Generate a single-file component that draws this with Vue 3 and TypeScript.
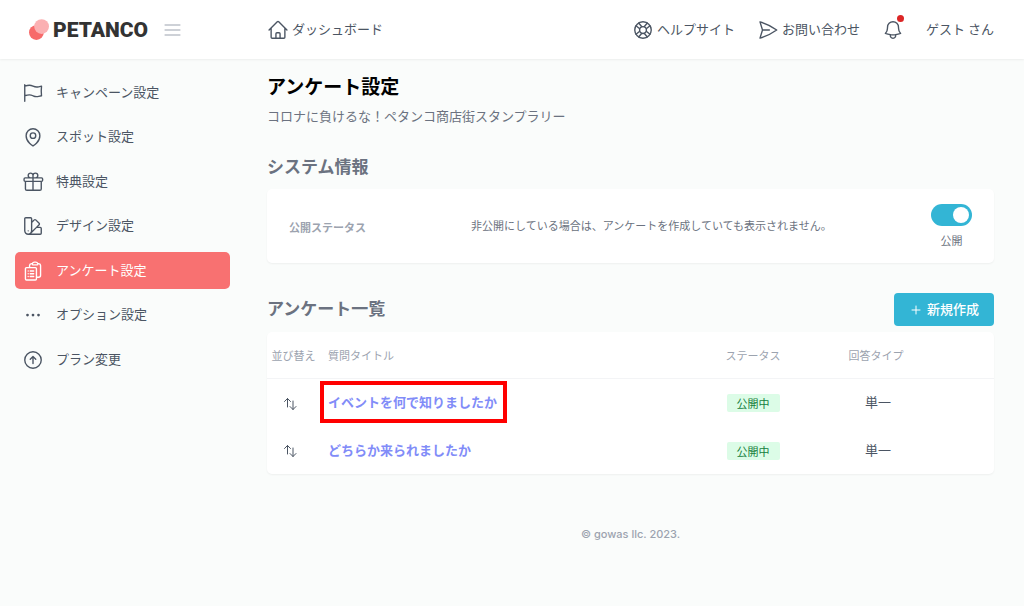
<script setup lang="ts">
import { ref } from 'vue'

interface NavItem {
  id: string
  label: string
  icon: string
}

interface Question {
  id: number
  title: string
  status: string
  type: string
  highlighted: boolean
}

const navItems: NavItem[] = [
  {
    id: 'campaign',
    label: 'キャンペーン設定',
    icon: 'M3 3v1.5M3 21v-6m0 0l2.77-.693a9 9 0 016.208.682l.108.054a9 9 0 006.086.71l3.114-.732a48.524 48.524 0 01-.005-10.499l-3.11.732a9 9 0 01-6.085-.711l-.108-.054a9 9 0 00-6.208-.682L3 4.5M3 15V4.5',
  },
  {
    id: 'spot',
    label: 'スポット設定',
    icon: 'M15 10.5a3 3 0 11-6 0 3 3 0 016 0zM19.5 10.5c0 7.142-7.5 11.25-7.5 11.25S4.5 17.642 4.5 10.5a7.5 7.5 0 1115 0z',
  },
  {
    id: 'gift',
    label: '特典設定',
    icon: 'M21 11.25v8.25a1.5 1.5 0 01-1.5 1.5H5.25a1.5 1.5 0 01-1.5-1.5v-8.25M12 4.875A2.625 2.625 0 109.375 7.5H12m0-2.625V7.5m0-2.625A2.625 2.625 0 1114.625 7.5H12m0 0V21m-8.625-9.75h18c.621 0 1.125-.504 1.125-1.125v-1.5c0-.621-.504-1.125-1.125-1.125h-18c-.621 0-1.125.504-1.125 1.125v1.5c0 .621.504 1.125 1.125 1.125z',
  },
  {
    id: 'design',
    label: 'デザイン設定',
    icon: 'M4.098 19.902a3.75 3.75 0 005.304 0l6.401-6.402M6.75 21A3.75 3.75 0 013 17.25V4.125C3 3.504 3.504 3 4.125 3h5.25c.621 0 1.125.504 1.125 1.125v4.072M6.75 21a3.75 3.75 0 003.75-3.75V8.197M6.75 21h13.125c.621 0 1.125-.504 1.125-1.125v-5.25c0-.621-.504-1.125-1.125-1.125h-4.072M10.5 8.197l2.88-2.88c.438-.439 1.15-.439 1.59 0l3.712 3.713c.44.44.44 1.152 0 1.59l-2.879 2.88M6.75 17.25h.008v.008H6.75v-.008z',
  },
  {
    id: 'survey',
    label: 'アンケート設定',
    icon: 'M9 12h3.75M9 15h3.75M9 18h3.75m3 .75H18a2.25 2.25 0 002.25-2.25V6.108c0-1.135-.845-2.098-1.976-2.192a48.424 48.424 0 00-1.123-.08m-5.801 0c-.065.21-.1.433-.1.664 0 .414.336.75.75.75h4.5a.75.75 0 00.75-.75 2.25 2.25 0 00-.1-.664m-5.8 0A2.251 2.251 0 0113.5 2.25H15c1.012 0 1.867.668 2.15 1.586m-5.8 0c-.376.023-.75.05-1.124.08C9.095 4.01 8.25 4.973 8.25 6.108V8.25m0 0H4.875c-.621 0-1.125.504-1.125 1.125v11.25c0 .621.504 1.125 1.125 1.125h9.75c.621 0 1.125-.504 1.125-1.125V9.375c0-.621-.504-1.125-1.125-1.125H8.25zM6.75 12h.008v.008H6.75V12zm0 3h.008v.008H6.75V15zm0 3h.008v.008H6.75V18z',
  },
  {
    id: 'option',
    label: 'オプション設定',
    icon: 'M6.75 12a.75.75 0 11-1.5 0 .75.75 0 011.5 0zM12.75 12a.75.75 0 11-1.5 0 .75.75 0 011.5 0zM18.75 12a.75.75 0 11-1.5 0 .75.75 0 011.5 0z',
  },
  {
    id: 'plan',
    label: 'プラン変更',
    icon: 'M15 11.25l-3-3m0 0l-3 3m3-3v7.5M21 12a9 9 0 11-18 0 9 9 0 0118 0z',
  },
]

const questions: Question[] = [
  { id: 1, title: 'イベントを何で知りましたか', status: '公開中', type: '単一', highlighted: true },
  { id: 2, title: 'どちらか来られましたか', status: '公開中', type: '単一', highlighted: false },
]

const activeId = ref('survey')
const published = ref(true)
</script>

<template>
  <div class="page">
    <header class="topbar">
      <div class="brand">
        <a class="logo" href="#">
          <svg class="logo-mark" viewBox="0 0 20 22" aria-hidden="true">
            <circle cx="7.4" cy="13.6" r="7.4" fill="#f76a6a" />
            <circle cx="12.6" cy="7.6" r="7.4" fill="#fbb0b2" />
          </svg>
          <span>PETANCO</span>
        </a>
        <button class="icon-button menu" type="button" aria-label="メニュー">
          <svg viewBox="0 0 17 12" aria-hidden="true"><path d="M1 1h15M1 6h15M1 11h15" /></svg>
        </button>
      </div>
      <nav class="top-links" aria-label="ヘッダー">
        <a class="top-link" href="#">
          <svg class="icon" viewBox="0 0 24 24" aria-hidden="true">
            <path d="M2.25 12l8.954-8.955c.44-.439 1.152-.439 1.591 0L21.75 12M4.5 9.75v10.125c0 .621.504 1.125 1.125 1.125H9.75v-4.875c0-.621.504-1.125 1.125-1.125h2.25c.621 0 1.125.504 1.125 1.125V21h4.125c.621 0 1.125-.504 1.125-1.125V9.75M8.25 21h8.25" />
          </svg>
          <span class="label">ダッシュボード</span>
        </a>
        <a class="top-link help" href="#">
          <svg class="icon" viewBox="0 0 24 24" aria-hidden="true">
            <circle cx="12" cy="12" r="9" />
            <circle cx="12" cy="12" r="3.75" />
            <path d="M16.712 4.33l-3.448 4.138M19.67 7.288l-4.138 3.448M7.288 4.33l3.448 4.138M4.33 7.288l4.138 3.448M16.712 19.67l-3.448-4.138M19.67 16.712l-4.138-3.448M7.288 19.67l3.448-4.138M4.33 16.712l4.138-3.448" />
          </svg>
          <span class="label">ヘルプサイト</span>
        </a>
        <a class="top-link" href="#">
          <svg class="icon" viewBox="0 0 24 24" aria-hidden="true">
            <path d="M6 12L3.269 3.126A59.768 59.768 0 0121.485 12 59.77 59.77 0 013.27 20.876L5.999 12zm0 0h7.5" />
          </svg>
          <span class="label">お問い合わせ</span>
        </a>
        <button class="icon-button bell" type="button" aria-label="通知">
          <svg class="icon" viewBox="0 0 24 24" aria-hidden="true">
            <path d="M14.857 17.082a23.848 23.848 0 005.454-1.31A8.967 8.967 0 0118 9.75v-.7V9A6 6 0 006 9v.75a8.967 8.967 0 01-2.312 6.022c1.733.64 3.56 1.085 5.455 1.31m5.714 0a24.255 24.255 0 01-5.714 0m5.714 0a3 3 0 11-5.714 0" />
          </svg>
          <span class="dot"></span>
        </button>
        <a class="top-link" href="#"><span class="label">ゲスト さん</span></a>
      </nav>
    </header>

    <div class="body">
      <nav class="sidebar" aria-label="メイン">
        <a
          v-for="item in navItems"
          :key="item.id"
          href="#"
          class="nav-item"
          :class="{ active: item.id === activeId }"
          :aria-current="item.id === activeId ? 'page' : undefined"
          @click.prevent="activeId = item.id"
        >
          <svg class="icon" viewBox="0 0 24 24" aria-hidden="true"><path :d="item.icon" /></svg>
          <span class="label">{{ item.label }}</span>
        </a>
      </nav>

      <main class="content">
        <h1>アンケート設定</h1>
        <p class="subtitle">コロナに負けるな！ペタンコ商店街スタンプラリー</p>

        <section>
          <h2 class="system-title">システム情報</h2>
          <div class="card status-card">
            <label class="status-label" for="publish">公開ステータス</label>
            <p class="status-text">非公開にしている場合は、アンケートを作成していても表示されません。</p>
            <div class="toggle">
              <input id="publish" v-model="published" class="switch" type="checkbox" role="switch" />
              <span>{{ published ? '公開' : '非公開' }}</span>
            </div>
          </div>
        </section>

        <section>
          <div class="list-head">
            <h2>アンケート一覧</h2>
            <button class="create" type="button">
              <svg viewBox="0 0 10 10" aria-hidden="true"><path d="M5 1v8M1 5h8" /></svg>
              <span class="label">新規作成</span>
            </button>
          </div>
          <div class="card">
            <table>
              <thead>
                <tr>
                  <th class="col-sort" scope="col">並び替え</th>
                  <th class="col-title" scope="col">質問タイトル</th>
                  <th class="col-status" scope="col">ステータス</th>
                  <th class="col-type" scope="col">回答タイプ</th>
                  <td class="col-end"></td>
                </tr>
              </thead>
              <tbody>
                <tr v-for="q in questions" :key="q.id">
                  <td class="sort">
                    <button class="icon-button" type="button" aria-label="並び替え">
                      <svg viewBox="0 0 14 14" aria-hidden="true"><path d="M4.500 10V1.500M1.500 4.500l3-3 3 3M10 4v8.500M7 9.500l3 3 3-3" /></svg>
                    </button>
                  </td>
                  <td class="title"><a href="#" :class="{ highlighted: q.highlighted }">{{ q.title }}</a></td>
                  <td class="status"><span class="badge">{{ q.status }}</span></td>
                  <td class="type">{{ q.type }}</td>
                  <td></td>
                </tr>
              </tbody>
            </table>
          </div>
        </section>

        <footer>© gowas llc. 2023.</footer>
      </main>
    </div>
  </div>
</template>

<style>
body {
  background: #fafcfb;
}
</style>

<style scoped>
.page {
  min-height: 100vh;
  color: #4b5563;
  font: 13px/20px "Noto Sans CJK JP", sans-serif;
}
.page *,
.page *::before {
  box-sizing: border-box;
}
a {
  color: inherit;
  text-decoration: none;
}
button {
  font: inherit;
  border: 0;
  cursor: pointer;
}
h1, h2, p {
  margin: 0;
}
svg {
  display: block;
  flex: none;
  fill: none;
  stroke: currentColor;
  stroke-linecap: round;
  stroke-linejoin: round;
}
.icon {
  width: 22px;
  height: 22px;
  stroke-width: 1.5;
}
.label {
  padding-bottom: 2px;
}
.icon-button {
  padding: 0;
  background: none;
  color: inherit;
}
.topbar {
  display: flex;
  align-items: center;
  height: 59px;
  background: #fff;
  box-shadow: 0 1px 2px rgba(0, 0, 0, 0.06);
}
.brand {
  display: flex;
  align-items: center;
  gap: 16px;
  width: 267px;
  padding-left: 29px;
}
.logo {
  display: flex;
  align-items: center;
  gap: 4px;
  color: #333;
  font: 900 21px/24px Roboto, sans-serif;
}
.logo-mark {
  width: 20px;
  height: 22px;
  stroke: none;
}
.menu {
  color: #9ca3af;
}
.menu svg {
  width: 17px;
  height: 12px;
}
.top-links {
  display: flex;
  flex: 1;
  align-items: center;
  gap: 22px;
  padding-right: 30px;
}
.top-link {
  display: flex;
  align-items: center;
  gap: 3px;
}
.help {
  margin-left: auto;
}
.bell {
  position: relative;
}
.dot {
  position: absolute;
  top: -4px;
  right: 0;
  width: 7px;
  height: 7px;
  border-radius: 50%;
  background: #dc2626;
}
.body {
  display: flex;
}
.sidebar {
  display: flex;
  flex: none;
  flex-direction: column;
  justify-content: space-between;
  width: 267px;
  height: 319px;
  padding: 15px 37px 0 15px;
}
.nav-item {
  display: flex;
  align-items: center;
  gap: 12px;
  height: 37px;
  padding: 0 7px;
  border-radius: 5px;
}
.active {
  background: #f87171;
  color: #fff;
}
.content {
  flex: 1;
  min-width: 0;
  padding: 14px 30px 0 0;
}
h1 {
  color: #000;
  font-size: 19px;
  line-height: 26px;
}
.subtitle {
  margin-top: 7px;
  color: #6b7280;
}
h2 {
  color: #6b7280;
  font-size: 17px;
  line-height: 24px;
}
.system-title {
  margin: 28px 0 11px;
}
.card {
  border-radius: 5px;
  background: #fff;
  box-shadow: 0 1px 2px rgba(0, 0, 0, 0.05);
}
.status-card {
  display: grid;
  grid-template-columns: 182px 1fr auto;
  align-items: center;
  padding: 15px 22px 13px;
}
.status-label {
  color: #9ca3af;
  font-size: 11px;
  font-weight: 700;
}
.status-text {
  padding-bottom: 4px;
  color: #6b7280;
  font-size: 11px;
}
.toggle {
  display: flex;
  flex-direction: column;
  align-items: center;
  gap: 4px;
  color: #6b7280;
  font-size: 11px;
}
.switch {
  display: flex;
  align-items: center;
  width: 41px;
  height: 22px;
  margin: 0;
  padding: 0 3px;
  border-radius: 11px;
  background: #d1d5db;
  appearance: none;
  cursor: pointer;
}
.switch::before {
  width: 16px;
  height: 16px;
  border-radius: 50%;
  background: #fff;
  content: "";
}
.switch:checked {
  justify-content: flex-end;
  background: #33b5d5;
}
.list-head {
  display: flex;
  align-items: center;
  justify-content: space-between;
  margin: 30px 0 6px;
}
.list-head h2 {
  padding-bottom: 4px;
}
.create {
  display: flex;
  align-items: center;
  gap: 6px;
  height: 33px;
  padding: 0 15px 0 17px;
  border-radius: 4px;
  background: #33b5d5;
  color: #fff;
  font-weight: 500;
}
.create svg {
  width: 10px;
  height: 10px;
}
table {
  width: 100%;
  border-collapse: collapse;
  table-layout: fixed;
}
th, td {
  padding: 0;
}
thead tr {
  height: 46px;
  border-bottom: 1px solid #f3f4f6;
}
th {
  color: #9ca3af;
  font-size: 11px;
  font-weight: 400;
}
tbody tr {
  height: 48px;
}
.col-sort {
  width: 53px;
}
.col-title {
  padding-left: 8px;
  text-align: left;
}
.col-status {
  width: 120px;
}
.col-type {
  width: 126px;
}
.col-end {
  width: 55px;
}
.sort .icon-button {
  vertical-align: middle;
}
.sort svg {
  width: 14px;
  height: 14px;
}
.sort,
.status,
.type {
  text-align: center;
}
.sort {
  padding-right: 8px;
}
.type {
  padding-left: 4px;
}
.title {
  padding-left: 4px;
}
.title a {
  display: inline-block;
  padding: 7px 6px 7px 4px;
  color: #818cf8;
  font-weight: 700;
  vertical-align: middle;
}
.title .highlighted {
  outline: 4px solid #f00;
}
.badge {
  display: inline-block;
  padding: 0 10px;
  border-radius: 2px;
  background: #dcfce7;
  color: #15803d;
  font-size: 11px;
  line-height: 18px;
  vertical-align: middle;
}
footer {
  margin-top: 50px;
  color: #9ca3af;
  font: 500 11px/20px Inter, sans-serif;
  text-align: center;
}
</style>
